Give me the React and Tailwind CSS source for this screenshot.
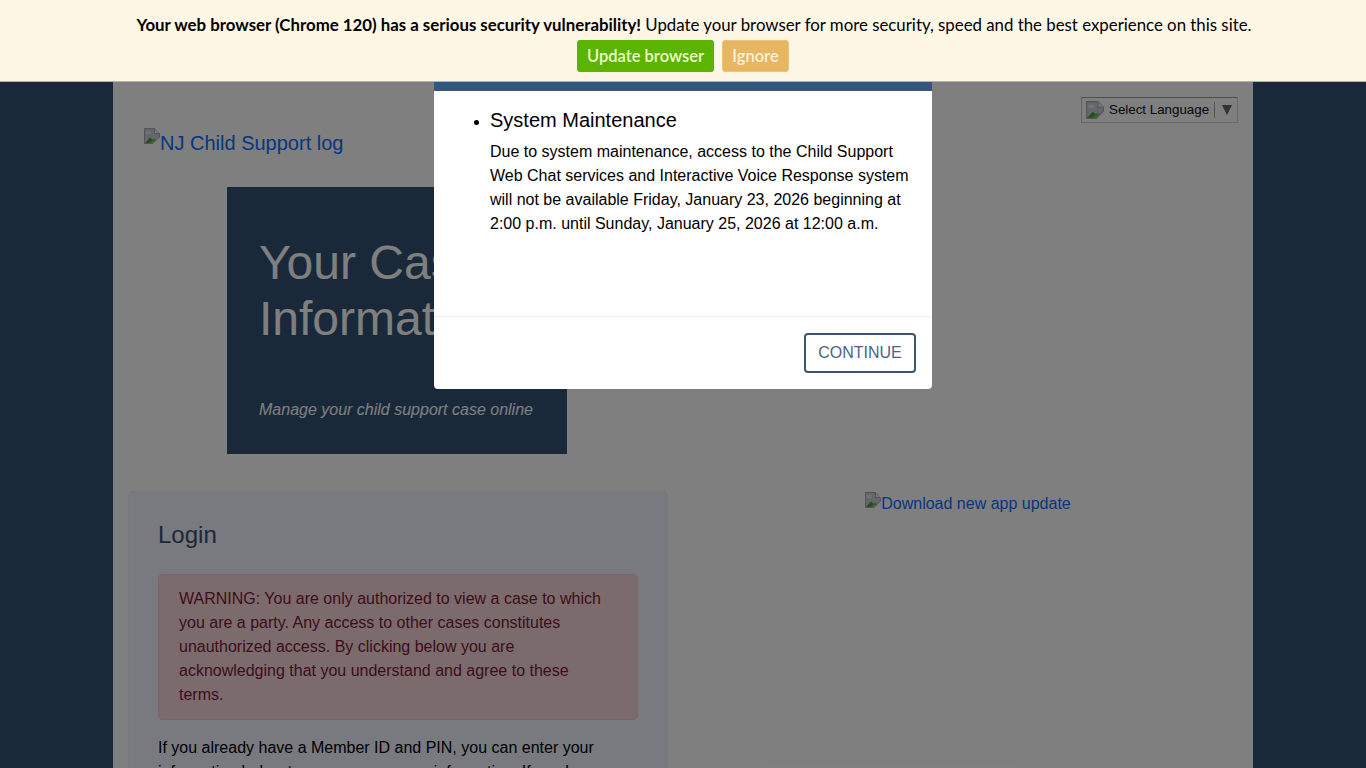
import React from "react";

function BrokenImage({ className = "" }) {
  return (
    <svg width="16" height="16" viewBox="0 0 16 16" className={`shrink-0 ${className}`}>
      <path d="M0.5 0.5H10.5L15.5 5.5V9L9 15.5H0.5Z" fill="#c8ccd2" stroke="#a8abb0" strokeWidth="1" />
      <path d="M10.5 0.5V5.5H15.5" fill="#f0f0f0" stroke="#a8abb0" strokeWidth="1" />
      <path d="M1 15L6 9.5L9 12L7 15Z" fill="#4f9a3a" />
      <path d="M5 15L10 10.5L12 12L8 15Z" fill="#79b85c" />
      <path d="M2 3H7V6H2Z" fill="#dfe6ee" />
    </svg>
  );
}

function SelectLanguage() {
  return (
    <div className="flex justify-end pr-[15px]">
      <div className="flex h-[26px] w-[157px] items-center border border-[#d5d5d5] border-t-[#9f9f9f] border-l-[#c8c8c8] pl-[4px] text-[13.33px] text-[#0c0c0c]">
        <BrokenImage className="mr-[5px] h-[18px] w-[18px]" />
        <span>Select Language</span>
        <span className="ml-[5px] h-[16px] border-l border-[#a8a8a8]" />
        <svg width="12" height="10" viewBox="0 0 12 10" className="ml-[6px]">
          <path d="M1 0H11L6 10Z" fill="#666666" />
        </svg>
      </div>
    </div>
  );
}

function SupportBanner() {
  return (
    <div className="absolute top-0 left-0 z-30 h-[82px] w-full border-b border-[#c9b36b] bg-[#fff7e6] pt-[13px] text-center font-['Lato',sans-serif] text-[16.82px] leading-[24px] text-black">
      <p className="pl-[22px]">
        <b>Your web browser (Chrome 120) has a serious security vulnerability!</b> Update your browser for more security, speed and the best experience on this site.
      </p>
      <div className="mt-[3px] flex justify-center gap-[8px]">
        <button className="h-[32px] w-[137px] rounded-[3px] bg-[#5ab400] text-[16.5px] font-semibold text-[#eaffc8]">Update browser</button>
        <button className="h-[32px] w-[67px] rounded-[3px] border border-[#efc27c] bg-[#e8b560] text-[16.5px] font-semibold text-[#fff2d8]">Ignore</button>
      </div>
    </div>
  );
}

function MaintenanceModal() {
  return (
    <div className="absolute top-[30px] left-[434px] z-20 w-[498px] overflow-hidden rounded-[4px] bg-white text-black">
      <div className="h-[61px] bg-[#34567e]" />
      <div className="h-[226px] border-b border-[#eeeeee] pt-[16px] pl-[56px] pr-[16px]">
        <ul className="list-disc">
          <li>
            <h4 className="text-[20px] leading-[26px]">System Maintenance</h4>
            <p className="mt-[7px] text-[16px] leading-[24px]">
              Due to system maintenance, access to the Child Support Web Chat services and Interactive Voice Response system will not be available Friday, January 23, 2026 beginning at 2:00 p.m. until Sunday, January 25, 2026 at 12:00 a.m.
            </p>
          </li>
        </ul>
      </div>
      <div className="flex h-[72px] items-start justify-end pt-[16px] pr-[16px]">
        <button className="h-[40px] w-[112px] rounded-[4px] border-2 border-[#3d5570] bg-white text-[16px] text-[#4a6585]">CONTINUE</button>
      </div>
    </div>
  );
}

export default function App() {
  return (
    <div className="relative h-[768px] overflow-hidden bg-[#335373] font-['Liberation_Sans',Arial,sans-serif]">
      <main className="mx-auto h-[768px] w-[1140px] overflow-hidden bg-white pt-[97px]">
        <SelectLanguage />

        <a className="mt-[5px] ml-[31px] flex items-start text-[20px] leading-[30px] text-[#0d6efd]">
          <BrokenImage />
          <span>NJ Child Support log</span>
        </a>

        <section className="mt-[29px] ml-[114px] h-[267px] w-[340px] bg-[#335373] px-[32px] pt-[48px] text-white">
          <h1 className="text-[48px] leading-[56px]">Your Case Information</h1>
          <p className="mt-[51px] text-[16px] italic leading-[24px]">Manage your child support case online</p>
        </section>

        <div className="mt-[37px] flex">
          <section className="ml-[15px] w-[540px] rounded-[5px] border border-[#f0f1f6] bg-[#f0f4ff] px-[29px] pt-[27px] pb-[20px]">
            <h2 className="text-[24px] leading-[32px] text-[#335373]">Login</h2>
            <div className="mt-[23px] rounded-[4px] border border-[#f5cdd1] bg-[#f8d7da] px-[20px] py-[12px] text-[16px] leading-[24px] text-[#7a1a35]">
              WARNING: You are only authorized to view a case to which you are a party. Any access to other cases constitutes unauthorized access. By clicking below you are acknowledging that you understand and agree to these terms.
            </div>
            <p className="mt-[16px] text-[16px] leading-[24px] text-black">
              If you already have a Member ID and PIN, you can enter your information below to access your case information. If you have forgotten your Member ID or PIN, select the option below.
            </p>
          </section>
          <div className="flex flex-1 justify-center pt-[1px] pl-[15px]">
            <a className="flex h-[24px] items-start text-[16px] leading-[24px] text-[#0d6efd]">
              <BrokenImage />
              <span>Download new app update</span>
            </a>
          </div>
        </div>
      </main>

      <div className="absolute inset-0 z-10 bg-black/50" />
      <MaintenanceModal />
      <SupportBanner />
    </div>
  );
}
